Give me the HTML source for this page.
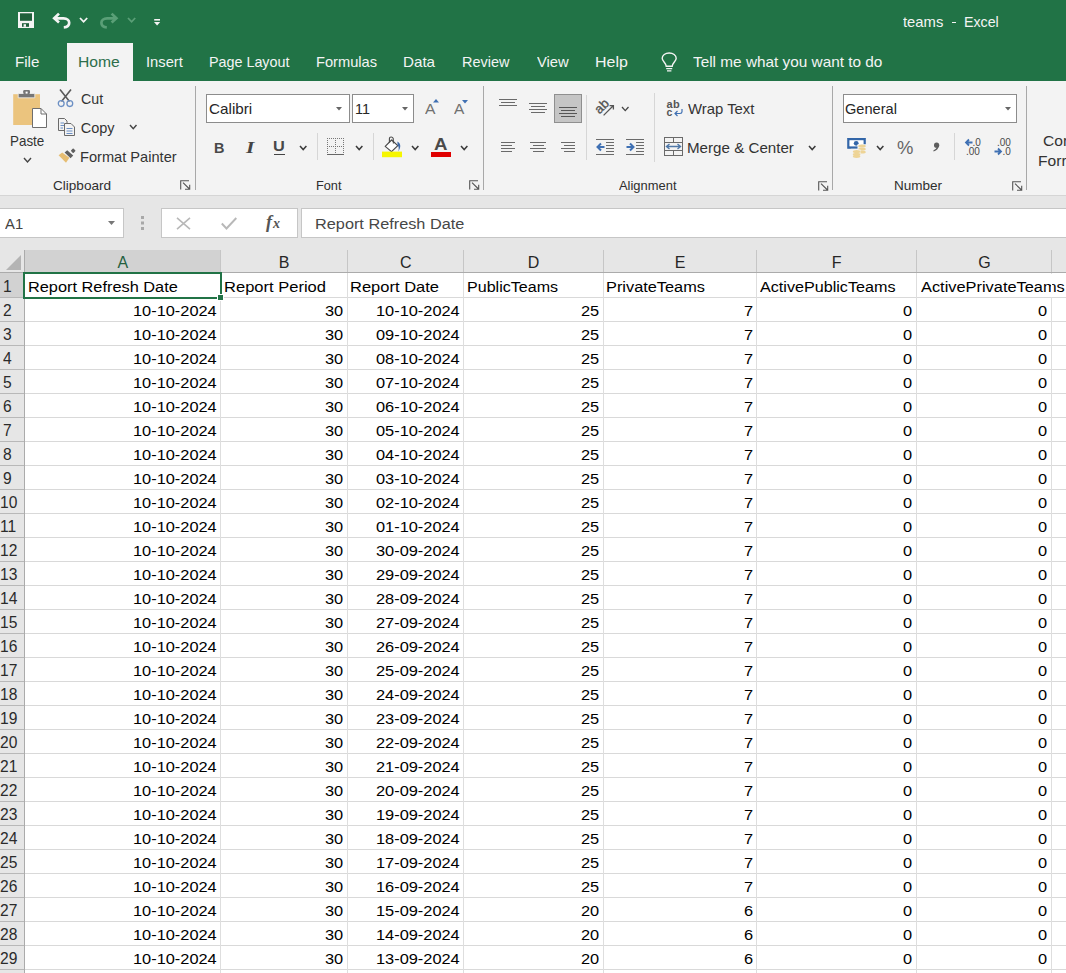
<!DOCTYPE html>
<html><head><meta charset="utf-8">
<style>
*{margin:0;padding:0;box-sizing:border-box}
html,body{width:1066px;height:973px;overflow:hidden;background:#fff;font-family:"Liberation Sans",sans-serif;position:relative}
.a{position:absolute}
.t{position:absolute;white-space:nowrap;line-height:1;transform-origin:0 0}
svg{position:absolute;overflow:visible}
</style></head><body>
<div class="a" style="left:0px;top:0px;width:1066px;height:81px;background:#217346;"></div>
<svg style="left:18px;top:12px" width="16" height="16" viewBox="0 0 16 16"><rect x="0" y="0" width="16" height="16" fill="#f4f4f4"/><rect x="2" y="1.3" width="12" height="7.5" fill="#1f5f3b"/><rect x="4" y="11.2" width="7" height="3.6" fill="#1f5f3b"/><rect x="5.6" y="12.2" width="2.4" height="2.6" fill="#f4f4f4"/></svg>
<svg style="left:52px;top:12px" width="20" height="18" viewBox="0 0 20 18"><path d="M7 1.6 L2.2 6.2 L7 10.6" fill="none" stroke="#f4f4f4" stroke-width="2.7" stroke-linejoin="miter"/><path d="M2.4 6.4 H11.5 C15.2 6.4 17.2 8.4 17.2 10.8 C17.2 13.4 15.2 15.2 11.8 15.4" fill="none" stroke="#f4f4f4" stroke-width="2.7"/></svg>
<svg style="left:78.6px;top:17.4px" width="9.2" height="5.8" viewBox="-1 -1 9.2 5.8"><path d="M0 0 L3.6 3.8 L7.2 0" fill="none" stroke="#f4f4f4" stroke-width="1.8"/></svg>
<svg style="left:99px;top:12px" width="20" height="18" viewBox="0 0 20 18"><path d="M12.6 1.6 L17.4 6.2 L12.6 10.6" fill="none" stroke="#5a9f77" stroke-width="2.7"/><path d="M17.2 6.4 H8.1 C4.4 6.4 2.4 8.4 2.4 10.8 C2.4 13.4 4.4 15.2 7.8 15.4" fill="none" stroke="#5a9f77" stroke-width="2.7"/></svg>
<svg style="left:126.6px;top:17.4px" width="9.2" height="5.8" viewBox="-1 -1 9.2 5.8"><path d="M0 0 L3.6 3.8 L7.2 0" fill="none" stroke="#5a9f77" stroke-width="1.8"/></svg>
<svg style="left:153.6px;top:18.5px" width="7" height="8" viewBox="0 0 7 8"><rect x="0.2" y="0" width="5.8" height="1.6" fill="#f4f4f4"/><path d="M0 3 H6.2 L3.1 6.6 Z" fill="#f4f4f4"/></svg>
<div class="t" style="left:903.08px;top:15.00px;font-size:14.5px;color:#f4f4f4;font-family:'Liberation Sans',sans-serif;transform:scaleX(1.0209)">teams</div>
<div class="a" style="left:952.3px;top:22px;width:4px;height:1.3px;background:#f4f4f4;"></div>
<div class="t" style="left:964.46px;top:15.00px;font-size:14.5px;color:#f4f4f4;font-family:'Liberation Sans',sans-serif;transform:scaleX(0.9805)">Excel</div>
<div class="a" style="left:67px;top:43px;width:66px;height:38px;background:#f3f3f3;"></div>
<div class="t" style="left:14.99px;top:54.00px;font-size:15px;color:#f4f4f4;font-family:'Liberation Sans',sans-serif;transform:scaleX(1.0101)">File</div>
<div class="t" style="left:78.25px;top:54.00px;font-size:15px;color:#2d6e4b;font-family:'Liberation Sans',sans-serif;transform:scaleX(1.0446)">Home</div>
<div class="t" style="left:146.18px;top:54.00px;font-size:15px;color:#f4f4f4;font-family:'Liberation Sans',sans-serif;transform:scaleX(0.9813)">Insert</div>
<div class="t" style="left:209.25px;top:54.00px;font-size:15px;color:#f4f4f4;font-family:'Liberation Sans',sans-serif;transform:scaleX(0.9548)">Page Layout</div>
<div class="t" style="left:316.33px;top:54.00px;font-size:15px;color:#f4f4f4;font-family:'Liberation Sans',sans-serif;transform:scaleX(0.9766)">Formulas</div>
<div class="t" style="left:403.29px;top:54.00px;font-size:15px;color:#f4f4f4;font-family:'Liberation Sans',sans-serif;transform:scaleX(1.0115)">Data</div>
<div class="t" style="left:462.24px;top:54.00px;font-size:15px;color:#f4f4f4;font-family:'Liberation Sans',sans-serif;transform:scaleX(0.9625)">Review</div>
<div class="t" style="left:536.93px;top:54.00px;font-size:15px;color:#f4f4f4;font-family:'Liberation Sans',sans-serif;transform:scaleX(0.9852)">View</div>
<div class="t" style="left:595.12px;top:54.00px;font-size:15px;color:#f4f4f4;font-family:'Liberation Sans',sans-serif;transform:scaleX(1.0646)">Help</div>
<div class="t" style="left:692.69px;top:54.00px;font-size:15px;color:#f4f4f4;font-family:'Liberation Sans',sans-serif;transform:scaleX(1.0233)">Tell me what you want to do</div>
<svg style="left:661px;top:52px" width="17" height="21" viewBox="0 0 17 21"><path d="M5.2 14.2 C5.2 11 1.2 9.5 1.2 6.2 C1.2 3.2 4.3 1 8.2 1 C12.1 1 15.2 3.2 15.2 6.2 C15.2 9.5 11.2 11 11.2 14.2 Z" fill="none" stroke="#f4f4f4" stroke-width="1.4"/><path d="M5.2 16.6 H11.2 M6 18.8 H10.4" stroke="#f4f4f4" stroke-width="1.3"/></svg>
<div class="a" style="left:0px;top:81px;width:1066px;height:114px;background:#f3f3f3;"></div>
<div class="a" style="left:0px;top:195px;width:1066px;height:1px;background:#d5d5d5;"></div>
<div class="a" style="left:195px;top:86px;width:1px;height:104px;background:#a8a8a8;"></div>
<div class="a" style="left:483px;top:86px;width:1px;height:104px;background:#a8a8a8;"></div>
<div class="a" style="left:832px;top:86px;width:1px;height:104px;background:#a8a8a8;"></div>
<div class="a" style="left:1026px;top:86px;width:1px;height:104px;background:#a8a8a8;"></div>
<svg style="left:12px;top:89px" width="37" height="40" viewBox="0 0 37 40"><rect x="1.2" y="5.2" width="26.8" height="30.8" fill="#ebc47e"/><path d="M6.2 4.5 H22.8 V8.8 H6.2 Z" fill="#767676" stroke="#f3f3f3" stroke-width="0.8"/><rect x="11.2" y="1" width="6.8" height="4" rx="1.2" fill="#767676"/><rect x="13.6" y="2.6" width="2" height="2" fill="#fff"/><path d="M20.5 19.5 H29 L34.5 25 V38.5 H20.5 Z" fill="#fff" stroke="#6e6e6e" stroke-width="1"/><path d="M29 19.5 V25 H34.5" fill="none" stroke="#6e6e6e" stroke-width="1"/></svg>
<div class="t" style="left:9.63px;top:134.00px;font-size:14.5px;color:#333;font-family:'Liberation Sans',sans-serif;transform:scaleX(0.9252)">Paste</div>
<svg style="left:22.8px;top:156.7px" width="9" height="6" viewBox="-1 -1 9 6"><path d="M0 0 L3.5 4 L7 0" fill="none" stroke="#444" stroke-width="1.4"/></svg>
<svg style="left:57px;top:89px" width="18" height="19" viewBox="0 0 18 19"><path d="M3 0.5 L12.5 12.5 M14 0.5 L4.5 12.5" stroke="#5a5a5a" stroke-width="1.6"/><circle cx="4.2" cy="14.6" r="2.9" fill="none" stroke="#6b8fc4" stroke-width="1.3"/><circle cx="12.8" cy="14.6" r="2.9" fill="none" stroke="#6b8fc4" stroke-width="1.3"/></svg>
<div class="t" style="left:80.79px;top:92.00px;font-size:14.5px;color:#333;font-family:'Liberation Sans',sans-serif;transform:scaleX(0.9793)">Cut</div>
<svg style="left:57px;top:117px" width="19" height="20" viewBox="0 0 19 20"><path d="M1.5 1.5 H7.5 L10 4 V13.5 H1.5 Z" fill="#f3f3f3" stroke="#6a6a6a" stroke-width="1"/><path d="M3.5 6 H7 M3.5 8.5 H7 M3.5 11 H6" stroke="#6b8fc4" stroke-width="1"/><path d="M7.5 6.5 H14 L17.5 10 V18.5 H7.5 Z" fill="#f3f3f3" stroke="#6a6a6a" stroke-width="1"/><path d="M9.5 11.5 H15.5 M9.5 14 H15.5 M9.5 16.5 H15.5" stroke="#6b8fc4" stroke-width="1"/></svg>
<div class="t" style="left:80.78px;top:121.00px;font-size:14.5px;color:#333;font-family:'Liberation Sans',sans-serif">Copy</div>
<svg style="left:129.3px;top:124.4px" width="8.5" height="5.8" viewBox="-1 -1 8.5 5.8"><path d="M0 0 L3.25 3.8 L6.5 0" fill="none" stroke="#444" stroke-width="1.4"/></svg>
<svg style="left:54px;top:144px" width="26" height="24" viewBox="0 0 26 24"><path d="M4.6 11.2 L8.2 8.6 L15.4 13.8 L12 18.8 Z" fill="#e6bd72"/><path d="M10.6 8.6 L13.2 6.2 L19.2 11.6 L16.6 14.2 Z" fill="#5f5f5f"/><rect x="17.4" y="5" width="3.6" height="3.6" rx="0.8" transform="rotate(45 19.2 6.8)" fill="#5f5f5f"/></svg>
<div class="t" style="left:80.33px;top:150.00px;font-size:14.5px;color:#333;font-family:'Liberation Sans',sans-serif;transform:scaleX(1.0078)">Format Painter</div>
<div class="t" style="left:53.12px;top:179.00px;font-size:13px;color:#2e2e2e;font-family:'Liberation Sans',sans-serif;transform:scaleX(1.0435)">Clipboard</div>
<svg style="left:180px;top:180px" width="11" height="10" viewBox="0 0 11 10"><path d="M0.7 9.5 V0.7 H9 M3 2.7 L9.5 9 M5 9.3 H9.7 V4.7" fill="none" stroke="#555" stroke-width="1.1"/></svg>
<div class="a" style="left:206px;top:94px;width:144px;height:29px;background:#fff;border:1px solid #8c8c8c"></div>
<div class="t" style="left:208.84px;top:101.00px;font-size:15px;color:#262626;font-family:'Liberation Sans',sans-serif;transform:scaleX(1.0166)">Calibri</div>
<svg style="left:336px;top:107px" width="6" height="3.5" viewBox="0 0 6 3.5"><path d="M0 0 H6 L3.0 3.5Z" fill="#666"/></svg>
<div class="a" style="left:352px;top:94px;width:62px;height:29px;background:#fff;border:1px solid #8c8c8c"></div>
<div class="t" style="left:355.22px;top:101.00px;font-size:15px;color:#262626;font-family:'Liberation Sans',sans-serif;transform:scaleX(0.9617)">11</div>
<svg style="left:402px;top:107px" width="6" height="3.5" viewBox="0 0 6 3.5"><path d="M0 0 H6 L3.0 3.5Z" fill="#666"/></svg>
<div class="t" style="left:425.00px;top:101.00px;font-size:15px;color:#707070;font-family:'Liberation Sans',sans-serif;transform:scaleX(1.0426)">A</div>
<svg style="left:433px;top:99px" width="6" height="3.5" viewBox="0 0 6 3.5"><path d="M0 3.5 H6 L3 0Z" fill="#3f70b3"/></svg>
<div class="t" style="left:454.30px;top:101.00px;font-size:15px;color:#707070;font-family:'Liberation Sans',sans-serif;transform:scaleX(1.0326)">A</div>
<svg style="left:462px;top:99.5px" width="6" height="3.5" viewBox="0 0 6 3.5"><path d="M0 0 H6 L3 3.5Z" fill="#3f70b3"/></svg>
<div class="t" style="left:213.86px;top:140.00px;font-size:15px;color:#484848;font-family:'Liberation Sans',sans-serif;font-weight:bold;transform:scaleX(0.9617)">B</div>
<div class="t" style="left:246.21px;top:140.00px;font-size:16px;color:#444;font-family:'Liberation Serif',serif;font-weight:bold;font-style:italic;transform:scaleX(1.3372)">I</div>
<div class="t" style="left:273.32px;top:138.00px;font-size:15.5px;color:#484848;font-family:'Liberation Sans',sans-serif;font-weight:bold;transform:scaleX(1.0538)">U</div>
<div class="a" style="left:274px;top:153.5px;width:11px;height:1.2px;background:#444;"></div>
<svg style="left:299px;top:144.8px" width="8.4" height="5.6" viewBox="-1 -1 8.4 5.6"><path d="M0 0 L3.2 3.6 L6.4 0" fill="none" stroke="#3a3a3a" stroke-width="1.5"/></svg>
<div class="a" style="left:317px;top:133px;width:1px;height:27px;background:#d6d6d6;"></div>
<svg style="left:327px;top:138px" width="18" height="18" viewBox="0 0 18 18" shape-rendering="crispEdges"><path d="M0.5 0 V16 M8.5 0 V16 M16.5 0 V16 M0 0.5 H17 M0 8.5 H17" fill="none" stroke="#777" stroke-width="1" stroke-dasharray="1 1"/><path d="M0 16.5 H17" stroke="#666" stroke-width="1"/></svg>
<svg style="left:355px;top:144.8px" width="8.4" height="5.6" viewBox="-1 -1 8.4 5.6"><path d="M0 0 L3.2 3.6 L6.4 0" fill="none" stroke="#3a3a3a" stroke-width="1.5"/></svg>
<div class="a" style="left:373px;top:133px;width:1px;height:27px;background:#d6d6d6;"></div>
<svg style="left:378px;top:134px" width="26" height="26" viewBox="0 0 26 26"><path d="M7.2 12.4 L13.6 6 L19.8 11.6 L13.5 17.6 Z" fill="#fff" stroke="#4a4a4a" stroke-width="1.2" stroke-linejoin="round"/><path d="M11.4 8.4 V4.6 C11.4 2.6 14.6 2.6 15.2 4.4 L15.4 9.6" fill="none" stroke="#4a4a4a" stroke-width="1.1"/><path d="M19.4 7.6 C22.4 9 23.6 12.6 20.4 17.4 C21 14.2 20.8 12.2 19.6 11.4 Z" fill="#3f6aa8"/><rect x="4" y="17.6" width="20" height="5.6" fill="#f6f600"/></svg>
<svg style="left:411px;top:144.8px" width="8.4" height="5.6" viewBox="-1 -1 8.4 5.6"><path d="M0 0 L3.2 3.6 L6.4 0" fill="none" stroke="#3a3a3a" stroke-width="1.5"/></svg>
<div class="t" style="left:434.33px;top:137.00px;font-size:16px;color:#4a4a4a;font-family:'Liberation Sans',sans-serif;font-weight:bold;transform:scaleX(1.1660)">A</div>
<div class="a" style="left:431px;top:152px;width:20px;height:5px;background:#e00000;"></div>
<svg style="left:460px;top:144.8px" width="8.4" height="5.6" viewBox="-1 -1 8.4 5.6"><path d="M0 0 L3.2 3.6 L6.4 0" fill="none" stroke="#3a3a3a" stroke-width="1.5"/></svg>
<div class="t" style="left:315.58px;top:179.00px;font-size:13px;color:#2e2e2e;font-family:'Liberation Sans',sans-serif;transform:scaleX(0.9801)">Font</div>
<svg style="left:469px;top:180px" width="11" height="10" viewBox="0 0 11 10"><path d="M0.7 9.5 V0.7 H9 M3 2.7 L9.5 9 M5 9.3 H9.7 V4.7" fill="none" stroke="#555" stroke-width="1.1"/></svg>
<svg style="left:499px;top:99px" width="19" height="20" viewBox="0 0 19 20" shape-rendering="crispEdges"><path d="M0 0.5 H18M2 3.5 H16M0 6.5 H18" stroke="#6a6a6a" stroke-width="1"/></svg>
<svg style="left:529px;top:103px" width="19" height="20" viewBox="0 0 19 20" shape-rendering="crispEdges"><path d="M0 0.5 H18M2 3.5 H16M0 6.5 H18M2 9.5 H16" stroke="#6a6a6a" stroke-width="1"/></svg>
<div class="a" style="left:554px;top:94px;width:28px;height:29px;background:#c5c5c5;border:1px solid #8f8f8f"></div>
<svg style="left:559px;top:107px" width="19" height="20" viewBox="0 0 19 20" shape-rendering="crispEdges"><path d="M0 0.5 H18M2 3.5 H16M0 6.5 H18M2 9.5 H16" stroke="#555" stroke-width="1"/></svg>
<div class="a" style="left:586px;top:95px;width:1px;height:65px;background:#d6d6d6;"></div>
<svg style="left:595px;top:98px" width="22" height="19" viewBox="0 0 22 19"><text x="0" y="0" font-family="Liberation Sans" font-size="13" fill="#555" stroke="#555" stroke-width="0.35" transform="translate(4.6 16.4) rotate(-45)">ab</text><path d="M8.6 17.4 L18.2 7.8 M14.6 7.6 H18.4 V11.4" fill="none" stroke="#555" stroke-width="1.3"/></svg>
<svg style="left:621px;top:106px" width="8.5" height="5.6" viewBox="-1 -1 8.5 5.6"><path d="M0 0 L3.25 3.6 L6.5 0" fill="none" stroke="#444" stroke-width="1.3"/></svg>
<svg style="left:501px;top:142px" width="19" height="20" viewBox="0 0 19 20" shape-rendering="crispEdges"><path d="M0 0.5 H14M0 3.5 H11M0 6.5 H14M0 9.5 H11" stroke="#6a6a6a" stroke-width="1"/></svg>
<svg style="left:530px;top:142px" width="19" height="20" viewBox="0 0 19 20" shape-rendering="crispEdges"><path d="M0 0.5 H16M2.5 3.5 H13.5M0 6.5 H16M2.5 9.5 H13.5" stroke="#6a6a6a" stroke-width="1"/></svg>
<svg style="left:561px;top:142px" width="19" height="20" viewBox="0 0 19 20" shape-rendering="crispEdges"><path d="M0 0.5 H14M3 3.5 H14M0 6.5 H14M3 9.5 H14" stroke="#6a6a6a" stroke-width="1"/></svg>
<svg style="left:596px;top:139px" width="19" height="17" viewBox="0 0 19 17" ><path d="M0 0.5 H18 M9.5 3.5 H18 M9.5 6.5 H18 M9.5 9.5 H18 M9.5 12.5 H18 M0 15.5 H18" stroke="#6a6a6a" stroke-width="1" shape-rendering="crispEdges"/><path d="M1.5 8 H8.5 M5 4.5 L1.5 8 L5 11.5" fill="none" stroke="#3f70b3" stroke-width="2"/></svg>
<svg style="left:626px;top:139px" width="19" height="17" viewBox="0 0 19 17" ><path d="M0 0.5 H18 M9.5 3.5 H18 M9.5 6.5 H18 M9.5 9.5 H18 M9.5 12.5 H18 M0 15.5 H18" stroke="#6a6a6a" stroke-width="1" shape-rendering="crispEdges"/><path d="M0.5 8 H7.5 M4 4.5 L7.5 8 L4 11.5" fill="none" stroke="#3f70b3" stroke-width="2"/></svg>
<div class="a" style="left:654px;top:93px;width:1px;height:69px;background:#d6d6d6;"></div>
<svg style="left:665px;top:99px" width="19" height="19" viewBox="0 0 19 19"><text x="1.6" y="8.8" font-family="Liberation Sans" font-size="11" font-weight="bold" letter-spacing="0.4" fill="#555">ab</text><text x="1.6" y="16.8" font-family="Liberation Sans" font-size="10.5" font-weight="bold" fill="#555">c</text><path d="M17 10 V12.8 C17 14 16 14.5 15 14.5 H10 M12.5 12 L10 14.5 L12.5 17" fill="none" stroke="#3f70b3" stroke-width="1.2"/></svg>
<div class="t" style="left:688.43px;top:102.00px;font-size:14.5px;color:#333;font-family:'Liberation Sans',sans-serif;transform:scaleX(1.0260)">Wrap Text</div>
<svg style="left:664px;top:137px" width="19" height="19" viewBox="0 0 19 19" ><path d="M0.5 0.5 H18.5 V18.5 H0.5 Z M0.5 5.5 H18.5 M0.5 13.5 H18.5 M9.5 0.5 V5.5 M9.5 13.5 V18.5" fill="none" stroke="#6a6a6a" stroke-width="1" shape-rendering="crispEdges"/><path d="M2.5 9.5 H16.5 M5.5 7 L2.5 9.5 L5.5 12 M13.5 7 L16.5 9.5 L13.5 12" fill="none" stroke="#4f78a8" stroke-width="1.4"/></svg>
<div class="t" style="left:687.29px;top:141.00px;font-size:14.5px;color:#333;font-family:'Liberation Sans',sans-serif;transform:scaleX(1.0444)">Merge &amp; Center</div>
<svg style="left:808px;top:144.8px" width="8.4" height="5.6" viewBox="-1 -1 8.4 5.6"><path d="M0 0 L3.2 3.6 L6.4 0" fill="none" stroke="#3a3a3a" stroke-width="1.5"/></svg>
<div class="t" style="left:618.50px;top:179.00px;font-size:13px;color:#2e2e2e;font-family:'Liberation Sans',sans-serif;transform:scaleX(0.9945)">Alignment</div>
<svg style="left:818px;top:180.5px" width="11" height="10" viewBox="0 0 11 10"><path d="M0.7 9.5 V0.7 H9 M3 2.7 L9.5 9 M5 9.3 H9.7 V4.7" fill="none" stroke="#555" stroke-width="1.1"/></svg>
<div class="a" style="left:843px;top:94px;width:174px;height:29px;background:#fff;border:1px solid #8c8c8c"></div>
<div class="t" style="left:845.47px;top:101.00px;font-size:15px;color:#262626;font-family:'Liberation Sans',sans-serif;transform:scaleX(0.9729)">General</div>
<svg style="left:1005px;top:107px" width="6" height="3.5" viewBox="0 0 6 3.5"><path d="M0 0 H6 L3.0 3.5Z" fill="#666"/></svg>
<svg style="left:842px;top:132px" width="30" height="30" viewBox="0 0 30 30"><rect x="5.2" y="6" width="18.6" height="10.6" fill="#3366a8"/><path d="M7.4 8.2 H21.6 V14.4 H7.4 Z" fill="#fff"/><path d="M5.2 6 H9 L7.4 8.2 Z M23.8 6 H20 L21.6 8.2 Z M5.2 16.6 H9 L7.4 14.4 Z" fill="#3366a8"/><circle cx="14.2" cy="11.3" r="2.4" fill="#3366a8"/><rect x="15.5" y="12.2" width="9" height="10" fill="#f3f3f3"/><ellipse cx="20" cy="14" rx="3.8" ry="1.6" fill="#eed496"/><ellipse cx="20" cy="17" rx="3.8" ry="1.6" fill="#eed496"/><ellipse cx="20" cy="20" rx="3.8" ry="1.6" fill="#eed496"/><rect x="10" y="17.5" width="8.5" height="8" fill="#f3f3f3"/><ellipse cx="14.6" cy="19.6" rx="3.8" ry="1.6" fill="#eed496"/><ellipse cx="14.6" cy="22.4" rx="3.8" ry="1.6" fill="#eed496"/><ellipse cx="14.6" cy="24.6" rx="3.8" ry="1.4" fill="#eed496"/></svg>
<svg style="left:876px;top:144.8px" width="8.4" height="5.6" viewBox="-1 -1 8.4 5.6"><path d="M0 0 L3.2 3.6 L6.4 0" fill="none" stroke="#3a3a3a" stroke-width="1.5"/></svg>
<div class="t" style="left:897.46px;top:139.00px;font-size:18px;color:#666;font-family:'Liberation Sans',sans-serif;transform:scaleX(1.0230)">%</div>
<svg style="left:932px;top:142px" width="8" height="10" viewBox="0 0 8 10"><circle cx="4.6" cy="3.2" r="2.6" fill="#5e5e5e"/><path d="M6.6 3.4 C6.8 6.2 5 8.4 1.6 9.4 L1.3 8.4 C3.6 7.4 4.8 6 4.8 4.2 Z" fill="#5e5e5e"/></svg>
<div class="a" style="left:954px;top:133px;width:1px;height:27px;background:#d6d6d6;"></div>
<svg style="left:964px;top:138px" width="18" height="19" viewBox="0 0 18 19"><path d="M2 4.5 H8.5 M5 1.5 L2 4.5 L5 7.5" fill="none" stroke="#3f70b3" stroke-width="1.8"/><text x="8.5" y="8" font-family="Liberation Sans" font-size="10" fill="#4a4a4a">.0</text><text x="2" y="17" font-family="Liberation Sans" font-size="10" fill="#4a4a4a">.00</text></svg>
<svg style="left:993px;top:138px" width="18" height="19" viewBox="0 0 18 19"><text x="4" y="8" font-family="Liberation Sans" font-size="10" fill="#4a4a4a">.00</text><path d="M1.5 13.5 H8 M5 10.5 L8 13.5 L5 16.5" fill="none" stroke="#3f70b3" stroke-width="1.8"/><text x="9.5" y="17" font-family="Liberation Sans" font-size="10" fill="#4a4a4a">.0</text></svg>
<div class="t" style="left:894.22px;top:179.00px;font-size:13px;color:#2e2e2e;font-family:'Liberation Sans',sans-serif;transform:scaleX(1.0405)">Number</div>
<svg style="left:1011.5px;top:180.5px" width="11" height="10" viewBox="0 0 11 10"><path d="M0.7 9.5 V0.7 H9 M3 2.7 L9.5 9 M5 9.3 H9.7 V4.7" fill="none" stroke="#555" stroke-width="1.1"/></svg>
<div class="t" style="left:1043.42px;top:133.00px;font-size:15px;color:#333;font-family:'Liberation Sans',sans-serif;transform:scaleX(1.0400)">Cor</div>
<div class="t" style="left:1037.95px;top:153.00px;font-size:15px;color:#333;font-family:'Liberation Sans',sans-serif;transform:scaleX(1.0400)">Forr</div>
<div class="a" style="left:0px;top:196px;width:1066px;height:54px;background:#e6e6e6;"></div>
<div class="a" style="left:-1px;top:208px;width:125px;height:30px;background:#fff;border:1px solid #c6c6c6"></div>
<div class="t" style="left:4.60px;top:216.00px;font-size:15.5px;color:#444;font-family:'Liberation Sans',sans-serif;transform:scaleX(0.9554)">A1</div>
<svg style="left:108px;top:221px" width="7" height="4" viewBox="0 0 7 4"><path d="M0 0 H7 L3.5 4Z" fill="#777"/></svg>
<svg style="left:141px;top:216px" width="3" height="14" viewBox="0 0 3 14"><rect x="0" y="0" width="3" height="3" fill="#a8a8a8"/><rect x="0" y="5.5" width="3" height="3" fill="#a8a8a8"/><rect x="0" y="11" width="3" height="3" fill="#a8a8a8"/></svg>
<div class="a" style="left:161px;top:208px;width:137px;height:30px;background:#fff;border:1px solid #c6c6c6"></div>
<svg style="left:176px;top:217px" width="15" height="13" viewBox="0 0 15 13"><path d="M1 0.8 L14 12.2 M14 0.8 L1 12.2" stroke="#b8b8b8" stroke-width="1.6"/></svg>
<svg style="left:221px;top:217px" width="16" height="13" viewBox="0 0 16 13"><path d="M0.8 6.5 L5.5 11.5 L15.3 1" fill="none" stroke="#b8b8b8" stroke-width="1.9"/></svg>

<svg style="left:264.5px;top:210.5px" width="19" height="21" viewBox="0 0 19 21"><text x="1" y="16.5" font-family="Liberation Serif" font-style="italic" font-weight="bold" font-size="18" fill="#555">f</text><text x="8" y="16.5" font-family="Liberation Serif" font-style="italic" font-weight="bold" font-size="14" fill="#555">x</text></svg>
<div class="a" style="left:301px;top:208px;width:780px;height:30px;background:#fff;border:1px solid #c6c6c6"></div>
<div class="t" style="left:315.00px;top:216.00px;font-size:15.5px;color:#474747;font-family:'Liberation Sans',sans-serif;transform:scaleX(1.0507)">Report Refresh Date</div>
<div class="a" style="left:0px;top:250px;width:1066px;height:723px;background:#fff;"></div>
<div class="a" style="left:0px;top:250px;width:1066px;height:23px;background:#e6e6e6;"></div>
<div class="a" style="left:24px;top:250px;width:196px;height:23px;background:#d2d2d2;"></div>
<div class="a" style="left:0px;top:272px;width:1066px;height:1px;background:#ababab;"></div>
<div class="a" style="left:220px;top:250px;width:1px;height:22px;background:#c6c6c6;"></div>
<div class="a" style="left:347px;top:250px;width:1px;height:22px;background:#c6c6c6;"></div>
<div class="a" style="left:463px;top:250px;width:1px;height:22px;background:#c6c6c6;"></div>
<div class="a" style="left:603px;top:250px;width:1px;height:22px;background:#c6c6c6;"></div>
<div class="a" style="left:756px;top:250px;width:1px;height:22px;background:#c6c6c6;"></div>
<div class="a" style="left:916px;top:250px;width:1px;height:22px;background:#c6c6c6;"></div>
<div class="a" style="left:1051px;top:250px;width:1px;height:22px;background:#c6c6c6;"></div>
<svg style="left:6px;top:255px" width="15" height="15" viewBox="0 0 15 15"><path d="M15 0 V15 H0 Z" fill="#b4b4b4"/></svg>
<div class="a" style="left:0px;top:273px;width:24px;height:700px;background:#e6e6e6;"></div>
<div class="a" style="left:0px;top:273px;width:24px;height:24px;background:#d2d2d2;"></div>
<div class="a" style="left:24px;top:250px;width:1px;height:723px;background:#ababab;"></div>
<div class="t" style="left:117.58px;top:255.00px;font-size:16px;color:#245f3f;font-family:'Liberation Sans',sans-serif">A</div>
<div class="t" style="left:278.84px;top:255.00px;font-size:16px;color:#262626;font-family:'Liberation Sans',sans-serif">B</div>
<div class="t" style="left:400.02px;top:255.00px;font-size:16px;color:#262626;font-family:'Liberation Sans',sans-serif">C</div>
<div class="t" style="left:527.86px;top:255.00px;font-size:16px;color:#262626;font-family:'Liberation Sans',sans-serif">D</div>
<div class="t" style="left:674.76px;top:255.00px;font-size:16px;color:#262626;font-family:'Liberation Sans',sans-serif">E</div>
<div class="t" style="left:831.70px;top:255.00px;font-size:16px;color:#262626;font-family:'Liberation Sans',sans-serif">F</div>
<div class="t" style="left:978.36px;top:255.00px;font-size:16px;color:#262626;font-family:'Liberation Sans',sans-serif">G</div>
<div class="t" style="left:1120.64px;top:255.00px;font-size:16px;color:#262626;font-family:'Liberation Sans',sans-serif">H</div>
<div class="t" style="left:2.84px;top:279.00px;font-size:16px;color:#2b2b2b;font-family:'Liberation Sans',sans-serif;transform:scaleX(0.9750)">1</div>
<div class="t" style="left:3.07px;top:303.00px;font-size:16px;color:#2b2b2b;font-family:'Liberation Sans',sans-serif;transform:scaleX(0.9750)">2</div>
<div class="t" style="left:3.07px;top:327.00px;font-size:16px;color:#2b2b2b;font-family:'Liberation Sans',sans-serif;transform:scaleX(0.9750)">3</div>
<div class="t" style="left:3.15px;top:351.00px;font-size:16px;color:#2b2b2b;font-family:'Liberation Sans',sans-serif;transform:scaleX(0.9750)">4</div>
<div class="t" style="left:3.07px;top:375.00px;font-size:16px;color:#2b2b2b;font-family:'Liberation Sans',sans-serif;transform:scaleX(0.9750)">5</div>
<div class="t" style="left:2.99px;top:399.00px;font-size:16px;color:#2b2b2b;font-family:'Liberation Sans',sans-serif;transform:scaleX(0.9750)">6</div>
<div class="t" style="left:3.07px;top:423.00px;font-size:16px;color:#2b2b2b;font-family:'Liberation Sans',sans-serif;transform:scaleX(0.9750)">7</div>
<div class="t" style="left:3.03px;top:447.00px;font-size:16px;color:#2b2b2b;font-family:'Liberation Sans',sans-serif;transform:scaleX(0.9750)">8</div>
<div class="t" style="left:3.07px;top:471.00px;font-size:16px;color:#2b2b2b;font-family:'Liberation Sans',sans-serif;transform:scaleX(0.9750)">9</div>
<div class="t" style="left:-0.32px;top:495.00px;font-size:16px;color:#2b2b2b;font-family:'Liberation Sans',sans-serif;transform:scaleX(0.9750)">10</div>
<div class="t" style="left:0.34px;top:519.00px;font-size:16px;color:#2b2b2b;font-family:'Liberation Sans',sans-serif;transform:scaleX(0.9750)">11</div>
<div class="t" style="left:-0.20px;top:543.00px;font-size:16px;color:#2b2b2b;font-family:'Liberation Sans',sans-serif;transform:scaleX(0.9750)">12</div>
<div class="t" style="left:-0.28px;top:567.00px;font-size:16px;color:#2b2b2b;font-family:'Liberation Sans',sans-serif;transform:scaleX(0.9750)">13</div>
<div class="t" style="left:-0.36px;top:591.00px;font-size:16px;color:#2b2b2b;font-family:'Liberation Sans',sans-serif;transform:scaleX(0.9750)">14</div>
<div class="t" style="left:-0.28px;top:615.00px;font-size:16px;color:#2b2b2b;font-family:'Liberation Sans',sans-serif;transform:scaleX(0.9750)">15</div>
<div class="t" style="left:-0.28px;top:639.00px;font-size:16px;color:#2b2b2b;font-family:'Liberation Sans',sans-serif;transform:scaleX(0.9750)">16</div>
<div class="t" style="left:-0.20px;top:663.00px;font-size:16px;color:#2b2b2b;font-family:'Liberation Sans',sans-serif;transform:scaleX(0.9750)">17</div>
<div class="t" style="left:-0.28px;top:687.00px;font-size:16px;color:#2b2b2b;font-family:'Liberation Sans',sans-serif;transform:scaleX(0.9750)">18</div>
<div class="t" style="left:-0.24px;top:711.00px;font-size:16px;color:#2b2b2b;font-family:'Liberation Sans',sans-serif;transform:scaleX(0.9750)">19</div>
<div class="t" style="left:-0.12px;top:735.00px;font-size:16px;color:#2b2b2b;font-family:'Liberation Sans',sans-serif;transform:scaleX(0.9750)">20</div>
<div class="t" style="left:-0.05px;top:759.00px;font-size:16px;color:#2b2b2b;font-family:'Liberation Sans',sans-serif;transform:scaleX(0.9750)">21</div>
<div class="t" style="left:-0.01px;top:783.00px;font-size:16px;color:#2b2b2b;font-family:'Liberation Sans',sans-serif;transform:scaleX(0.9750)">22</div>
<div class="t" style="left:-0.09px;top:807.00px;font-size:16px;color:#2b2b2b;font-family:'Liberation Sans',sans-serif;transform:scaleX(0.9750)">23</div>
<div class="t" style="left:-0.16px;top:831.00px;font-size:16px;color:#2b2b2b;font-family:'Liberation Sans',sans-serif;transform:scaleX(0.9750)">24</div>
<div class="t" style="left:-0.09px;top:855.00px;font-size:16px;color:#2b2b2b;font-family:'Liberation Sans',sans-serif;transform:scaleX(0.9750)">25</div>
<div class="t" style="left:-0.09px;top:879.00px;font-size:16px;color:#2b2b2b;font-family:'Liberation Sans',sans-serif;transform:scaleX(0.9750)">26</div>
<div class="t" style="left:-0.01px;top:903.00px;font-size:16px;color:#2b2b2b;font-family:'Liberation Sans',sans-serif;transform:scaleX(0.9750)">27</div>
<div class="t" style="left:-0.09px;top:927.00px;font-size:16px;color:#2b2b2b;font-family:'Liberation Sans',sans-serif;transform:scaleX(0.9750)">28</div>
<div class="t" style="left:-0.05px;top:951.00px;font-size:16px;color:#2b2b2b;font-family:'Liberation Sans',sans-serif;transform:scaleX(0.9750)">29</div>
<div class="a" style="left:0px;top:297px;width:24px;height:1px;background:#b8b8b8;"></div>
<div class="a" style="left:25px;top:297px;width:1041px;height:1px;background:#d9d9d9;"></div>
<div class="a" style="left:0px;top:321px;width:24px;height:1px;background:#b8b8b8;"></div>
<div class="a" style="left:25px;top:321px;width:1041px;height:1px;background:#d9d9d9;"></div>
<div class="a" style="left:0px;top:345px;width:24px;height:1px;background:#b8b8b8;"></div>
<div class="a" style="left:25px;top:345px;width:1041px;height:1px;background:#d9d9d9;"></div>
<div class="a" style="left:0px;top:369px;width:24px;height:1px;background:#b8b8b8;"></div>
<div class="a" style="left:25px;top:369px;width:1041px;height:1px;background:#d9d9d9;"></div>
<div class="a" style="left:0px;top:393px;width:24px;height:1px;background:#b8b8b8;"></div>
<div class="a" style="left:25px;top:393px;width:1041px;height:1px;background:#d9d9d9;"></div>
<div class="a" style="left:0px;top:417px;width:24px;height:1px;background:#b8b8b8;"></div>
<div class="a" style="left:25px;top:417px;width:1041px;height:1px;background:#d9d9d9;"></div>
<div class="a" style="left:0px;top:441px;width:24px;height:1px;background:#b8b8b8;"></div>
<div class="a" style="left:25px;top:441px;width:1041px;height:1px;background:#d9d9d9;"></div>
<div class="a" style="left:0px;top:465px;width:24px;height:1px;background:#b8b8b8;"></div>
<div class="a" style="left:25px;top:465px;width:1041px;height:1px;background:#d9d9d9;"></div>
<div class="a" style="left:0px;top:489px;width:24px;height:1px;background:#b8b8b8;"></div>
<div class="a" style="left:25px;top:489px;width:1041px;height:1px;background:#d9d9d9;"></div>
<div class="a" style="left:0px;top:513px;width:24px;height:1px;background:#b8b8b8;"></div>
<div class="a" style="left:25px;top:513px;width:1041px;height:1px;background:#d9d9d9;"></div>
<div class="a" style="left:0px;top:537px;width:24px;height:1px;background:#b8b8b8;"></div>
<div class="a" style="left:25px;top:537px;width:1041px;height:1px;background:#d9d9d9;"></div>
<div class="a" style="left:0px;top:561px;width:24px;height:1px;background:#b8b8b8;"></div>
<div class="a" style="left:25px;top:561px;width:1041px;height:1px;background:#d9d9d9;"></div>
<div class="a" style="left:0px;top:585px;width:24px;height:1px;background:#b8b8b8;"></div>
<div class="a" style="left:25px;top:585px;width:1041px;height:1px;background:#d9d9d9;"></div>
<div class="a" style="left:0px;top:609px;width:24px;height:1px;background:#b8b8b8;"></div>
<div class="a" style="left:25px;top:609px;width:1041px;height:1px;background:#d9d9d9;"></div>
<div class="a" style="left:0px;top:633px;width:24px;height:1px;background:#b8b8b8;"></div>
<div class="a" style="left:25px;top:633px;width:1041px;height:1px;background:#d9d9d9;"></div>
<div class="a" style="left:0px;top:657px;width:24px;height:1px;background:#b8b8b8;"></div>
<div class="a" style="left:25px;top:657px;width:1041px;height:1px;background:#d9d9d9;"></div>
<div class="a" style="left:0px;top:681px;width:24px;height:1px;background:#b8b8b8;"></div>
<div class="a" style="left:25px;top:681px;width:1041px;height:1px;background:#d9d9d9;"></div>
<div class="a" style="left:0px;top:705px;width:24px;height:1px;background:#b8b8b8;"></div>
<div class="a" style="left:25px;top:705px;width:1041px;height:1px;background:#d9d9d9;"></div>
<div class="a" style="left:0px;top:729px;width:24px;height:1px;background:#b8b8b8;"></div>
<div class="a" style="left:25px;top:729px;width:1041px;height:1px;background:#d9d9d9;"></div>
<div class="a" style="left:0px;top:753px;width:24px;height:1px;background:#b8b8b8;"></div>
<div class="a" style="left:25px;top:753px;width:1041px;height:1px;background:#d9d9d9;"></div>
<div class="a" style="left:0px;top:777px;width:24px;height:1px;background:#b8b8b8;"></div>
<div class="a" style="left:25px;top:777px;width:1041px;height:1px;background:#d9d9d9;"></div>
<div class="a" style="left:0px;top:801px;width:24px;height:1px;background:#b8b8b8;"></div>
<div class="a" style="left:25px;top:801px;width:1041px;height:1px;background:#d9d9d9;"></div>
<div class="a" style="left:0px;top:825px;width:24px;height:1px;background:#b8b8b8;"></div>
<div class="a" style="left:25px;top:825px;width:1041px;height:1px;background:#d9d9d9;"></div>
<div class="a" style="left:0px;top:849px;width:24px;height:1px;background:#b8b8b8;"></div>
<div class="a" style="left:25px;top:849px;width:1041px;height:1px;background:#d9d9d9;"></div>
<div class="a" style="left:0px;top:873px;width:24px;height:1px;background:#b8b8b8;"></div>
<div class="a" style="left:25px;top:873px;width:1041px;height:1px;background:#d9d9d9;"></div>
<div class="a" style="left:0px;top:897px;width:24px;height:1px;background:#b8b8b8;"></div>
<div class="a" style="left:25px;top:897px;width:1041px;height:1px;background:#d9d9d9;"></div>
<div class="a" style="left:0px;top:921px;width:24px;height:1px;background:#b8b8b8;"></div>
<div class="a" style="left:25px;top:921px;width:1041px;height:1px;background:#d9d9d9;"></div>
<div class="a" style="left:0px;top:945px;width:24px;height:1px;background:#b8b8b8;"></div>
<div class="a" style="left:25px;top:945px;width:1041px;height:1px;background:#d9d9d9;"></div>
<div class="a" style="left:0px;top:969px;width:24px;height:1px;background:#b8b8b8;"></div>
<div class="a" style="left:25px;top:969px;width:1041px;height:1px;background:#d9d9d9;"></div>
<div class="a" style="left:220px;top:273px;width:1px;height:700px;background:#dedede;"></div>
<div class="a" style="left:347px;top:273px;width:1px;height:700px;background:#dedede;"></div>
<div class="a" style="left:463px;top:273px;width:1px;height:700px;background:#dedede;"></div>
<div class="a" style="left:603px;top:273px;width:1px;height:700px;background:#dedede;"></div>
<div class="a" style="left:756px;top:273px;width:1px;height:700px;background:#dedede;"></div>
<div class="a" style="left:916px;top:273px;width:1px;height:700px;background:#dedede;"></div>
<div class="a" style="left:1051px;top:273px;width:1px;height:700px;background:#dedede;"></div>
<div class="t" style="left:27.59px;top:279.00px;font-size:15.5px;color:#000;font-family:'Liberation Sans',sans-serif;transform:scaleX(1.0535)">Report Refresh Date</div>
<div class="t" style="left:223.68px;top:279.00px;font-size:15.5px;color:#000;font-family:'Liberation Sans',sans-serif;transform:scaleX(1.0665)">Report Period</div>
<div class="t" style="left:350.48px;top:279.00px;font-size:15.5px;color:#000;font-family:'Liberation Sans',sans-serif;transform:scaleX(1.0649)">Report Date</div>
<div class="t" style="left:466.62px;top:279.00px;font-size:15.5px;color:#000;font-family:'Liberation Sans',sans-serif;transform:scaleX(1.0360)">PublicTeams</div>
<div class="t" style="left:606.49px;top:279.00px;font-size:15.5px;color:#000;font-family:'Liberation Sans',sans-serif;transform:scaleX(1.0537)">PrivateTeams</div>
<div class="t" style="left:760.40px;top:279.00px;font-size:15.5px;color:#000;font-family:'Liberation Sans',sans-serif;transform:scaleX(1.0417)">ActivePublicTeams</div>
<div class="t" style="left:920.50px;top:279.00px;font-size:15.5px;color:#000;font-family:'Liberation Sans',sans-serif;transform:scaleX(1.0565)">ActivePrivateTeams</div>
<div class="t" style="left:132.77px;top:303.00px;font-size:15.5px;color:#000;font-family:'Liberation Sans',sans-serif;transform:scaleX(1.0560)">10-10-2024</div>
<div class="t" style="left:325.40px;top:303.00px;font-size:15.5px;color:#000;font-family:'Liberation Sans',sans-serif;transform:scaleX(1.0560)">30</div>
<div class="t" style="left:375.77px;top:303.00px;font-size:15.5px;color:#000;font-family:'Liberation Sans',sans-serif;transform:scaleX(1.0560)">10-10-2024</div>
<div class="t" style="left:581.49px;top:303.00px;font-size:15.5px;color:#000;font-family:'Liberation Sans',sans-serif;transform:scaleX(1.0560)">25</div>
<div class="t" style="left:743.73px;top:303.00px;font-size:15.5px;color:#000;font-family:'Liberation Sans',sans-serif;transform:scaleX(1.0560)">7</div>
<div class="t" style="left:903.49px;top:303.00px;font-size:15.5px;color:#000;font-family:'Liberation Sans',sans-serif;transform:scaleX(1.0560)">0</div>
<div class="t" style="left:1038.49px;top:303.00px;font-size:15.5px;color:#000;font-family:'Liberation Sans',sans-serif;transform:scaleX(1.0560)">0</div>
<div class="t" style="left:132.77px;top:327.00px;font-size:15.5px;color:#000;font-family:'Liberation Sans',sans-serif;transform:scaleX(1.0560)">10-10-2024</div>
<div class="t" style="left:325.40px;top:327.00px;font-size:15.5px;color:#000;font-family:'Liberation Sans',sans-serif;transform:scaleX(1.0560)">30</div>
<div class="t" style="left:375.77px;top:327.00px;font-size:15.5px;color:#000;font-family:'Liberation Sans',sans-serif;transform:scaleX(1.0560)">09-10-2024</div>
<div class="t" style="left:581.49px;top:327.00px;font-size:15.5px;color:#000;font-family:'Liberation Sans',sans-serif;transform:scaleX(1.0560)">25</div>
<div class="t" style="left:743.73px;top:327.00px;font-size:15.5px;color:#000;font-family:'Liberation Sans',sans-serif;transform:scaleX(1.0560)">7</div>
<div class="t" style="left:903.49px;top:327.00px;font-size:15.5px;color:#000;font-family:'Liberation Sans',sans-serif;transform:scaleX(1.0560)">0</div>
<div class="t" style="left:1038.49px;top:327.00px;font-size:15.5px;color:#000;font-family:'Liberation Sans',sans-serif;transform:scaleX(1.0560)">0</div>
<div class="t" style="left:132.77px;top:351.00px;font-size:15.5px;color:#000;font-family:'Liberation Sans',sans-serif;transform:scaleX(1.0560)">10-10-2024</div>
<div class="t" style="left:325.40px;top:351.00px;font-size:15.5px;color:#000;font-family:'Liberation Sans',sans-serif;transform:scaleX(1.0560)">30</div>
<div class="t" style="left:375.77px;top:351.00px;font-size:15.5px;color:#000;font-family:'Liberation Sans',sans-serif;transform:scaleX(1.0560)">08-10-2024</div>
<div class="t" style="left:581.49px;top:351.00px;font-size:15.5px;color:#000;font-family:'Liberation Sans',sans-serif;transform:scaleX(1.0560)">25</div>
<div class="t" style="left:743.73px;top:351.00px;font-size:15.5px;color:#000;font-family:'Liberation Sans',sans-serif;transform:scaleX(1.0560)">7</div>
<div class="t" style="left:903.49px;top:351.00px;font-size:15.5px;color:#000;font-family:'Liberation Sans',sans-serif;transform:scaleX(1.0560)">0</div>
<div class="t" style="left:1038.49px;top:351.00px;font-size:15.5px;color:#000;font-family:'Liberation Sans',sans-serif;transform:scaleX(1.0560)">0</div>
<div class="t" style="left:132.77px;top:375.00px;font-size:15.5px;color:#000;font-family:'Liberation Sans',sans-serif;transform:scaleX(1.0560)">10-10-2024</div>
<div class="t" style="left:325.40px;top:375.00px;font-size:15.5px;color:#000;font-family:'Liberation Sans',sans-serif;transform:scaleX(1.0560)">30</div>
<div class="t" style="left:375.77px;top:375.00px;font-size:15.5px;color:#000;font-family:'Liberation Sans',sans-serif;transform:scaleX(1.0560)">07-10-2024</div>
<div class="t" style="left:581.49px;top:375.00px;font-size:15.5px;color:#000;font-family:'Liberation Sans',sans-serif;transform:scaleX(1.0560)">25</div>
<div class="t" style="left:743.73px;top:375.00px;font-size:15.5px;color:#000;font-family:'Liberation Sans',sans-serif;transform:scaleX(1.0560)">7</div>
<div class="t" style="left:903.49px;top:375.00px;font-size:15.5px;color:#000;font-family:'Liberation Sans',sans-serif;transform:scaleX(1.0560)">0</div>
<div class="t" style="left:1038.49px;top:375.00px;font-size:15.5px;color:#000;font-family:'Liberation Sans',sans-serif;transform:scaleX(1.0560)">0</div>
<div class="t" style="left:132.77px;top:399.00px;font-size:15.5px;color:#000;font-family:'Liberation Sans',sans-serif;transform:scaleX(1.0560)">10-10-2024</div>
<div class="t" style="left:325.40px;top:399.00px;font-size:15.5px;color:#000;font-family:'Liberation Sans',sans-serif;transform:scaleX(1.0560)">30</div>
<div class="t" style="left:375.77px;top:399.00px;font-size:15.5px;color:#000;font-family:'Liberation Sans',sans-serif;transform:scaleX(1.0560)">06-10-2024</div>
<div class="t" style="left:581.49px;top:399.00px;font-size:15.5px;color:#000;font-family:'Liberation Sans',sans-serif;transform:scaleX(1.0560)">25</div>
<div class="t" style="left:743.73px;top:399.00px;font-size:15.5px;color:#000;font-family:'Liberation Sans',sans-serif;transform:scaleX(1.0560)">7</div>
<div class="t" style="left:903.49px;top:399.00px;font-size:15.5px;color:#000;font-family:'Liberation Sans',sans-serif;transform:scaleX(1.0560)">0</div>
<div class="t" style="left:1038.49px;top:399.00px;font-size:15.5px;color:#000;font-family:'Liberation Sans',sans-serif;transform:scaleX(1.0560)">0</div>
<div class="t" style="left:132.77px;top:423.00px;font-size:15.5px;color:#000;font-family:'Liberation Sans',sans-serif;transform:scaleX(1.0560)">10-10-2024</div>
<div class="t" style="left:325.40px;top:423.00px;font-size:15.5px;color:#000;font-family:'Liberation Sans',sans-serif;transform:scaleX(1.0560)">30</div>
<div class="t" style="left:375.77px;top:423.00px;font-size:15.5px;color:#000;font-family:'Liberation Sans',sans-serif;transform:scaleX(1.0560)">05-10-2024</div>
<div class="t" style="left:581.49px;top:423.00px;font-size:15.5px;color:#000;font-family:'Liberation Sans',sans-serif;transform:scaleX(1.0560)">25</div>
<div class="t" style="left:743.73px;top:423.00px;font-size:15.5px;color:#000;font-family:'Liberation Sans',sans-serif;transform:scaleX(1.0560)">7</div>
<div class="t" style="left:903.49px;top:423.00px;font-size:15.5px;color:#000;font-family:'Liberation Sans',sans-serif;transform:scaleX(1.0560)">0</div>
<div class="t" style="left:1038.49px;top:423.00px;font-size:15.5px;color:#000;font-family:'Liberation Sans',sans-serif;transform:scaleX(1.0560)">0</div>
<div class="t" style="left:132.77px;top:447.00px;font-size:15.5px;color:#000;font-family:'Liberation Sans',sans-serif;transform:scaleX(1.0560)">10-10-2024</div>
<div class="t" style="left:325.40px;top:447.00px;font-size:15.5px;color:#000;font-family:'Liberation Sans',sans-serif;transform:scaleX(1.0560)">30</div>
<div class="t" style="left:375.77px;top:447.00px;font-size:15.5px;color:#000;font-family:'Liberation Sans',sans-serif;transform:scaleX(1.0560)">04-10-2024</div>
<div class="t" style="left:581.49px;top:447.00px;font-size:15.5px;color:#000;font-family:'Liberation Sans',sans-serif;transform:scaleX(1.0560)">25</div>
<div class="t" style="left:743.73px;top:447.00px;font-size:15.5px;color:#000;font-family:'Liberation Sans',sans-serif;transform:scaleX(1.0560)">7</div>
<div class="t" style="left:903.49px;top:447.00px;font-size:15.5px;color:#000;font-family:'Liberation Sans',sans-serif;transform:scaleX(1.0560)">0</div>
<div class="t" style="left:1038.49px;top:447.00px;font-size:15.5px;color:#000;font-family:'Liberation Sans',sans-serif;transform:scaleX(1.0560)">0</div>
<div class="t" style="left:132.77px;top:471.00px;font-size:15.5px;color:#000;font-family:'Liberation Sans',sans-serif;transform:scaleX(1.0560)">10-10-2024</div>
<div class="t" style="left:325.40px;top:471.00px;font-size:15.5px;color:#000;font-family:'Liberation Sans',sans-serif;transform:scaleX(1.0560)">30</div>
<div class="t" style="left:375.77px;top:471.00px;font-size:15.5px;color:#000;font-family:'Liberation Sans',sans-serif;transform:scaleX(1.0560)">03-10-2024</div>
<div class="t" style="left:581.49px;top:471.00px;font-size:15.5px;color:#000;font-family:'Liberation Sans',sans-serif;transform:scaleX(1.0560)">25</div>
<div class="t" style="left:743.73px;top:471.00px;font-size:15.5px;color:#000;font-family:'Liberation Sans',sans-serif;transform:scaleX(1.0560)">7</div>
<div class="t" style="left:903.49px;top:471.00px;font-size:15.5px;color:#000;font-family:'Liberation Sans',sans-serif;transform:scaleX(1.0560)">0</div>
<div class="t" style="left:1038.49px;top:471.00px;font-size:15.5px;color:#000;font-family:'Liberation Sans',sans-serif;transform:scaleX(1.0560)">0</div>
<div class="t" style="left:132.77px;top:495.00px;font-size:15.5px;color:#000;font-family:'Liberation Sans',sans-serif;transform:scaleX(1.0560)">10-10-2024</div>
<div class="t" style="left:325.40px;top:495.00px;font-size:15.5px;color:#000;font-family:'Liberation Sans',sans-serif;transform:scaleX(1.0560)">30</div>
<div class="t" style="left:375.77px;top:495.00px;font-size:15.5px;color:#000;font-family:'Liberation Sans',sans-serif;transform:scaleX(1.0560)">02-10-2024</div>
<div class="t" style="left:581.49px;top:495.00px;font-size:15.5px;color:#000;font-family:'Liberation Sans',sans-serif;transform:scaleX(1.0560)">25</div>
<div class="t" style="left:743.73px;top:495.00px;font-size:15.5px;color:#000;font-family:'Liberation Sans',sans-serif;transform:scaleX(1.0560)">7</div>
<div class="t" style="left:903.49px;top:495.00px;font-size:15.5px;color:#000;font-family:'Liberation Sans',sans-serif;transform:scaleX(1.0560)">0</div>
<div class="t" style="left:1038.49px;top:495.00px;font-size:15.5px;color:#000;font-family:'Liberation Sans',sans-serif;transform:scaleX(1.0560)">0</div>
<div class="t" style="left:132.77px;top:519.00px;font-size:15.5px;color:#000;font-family:'Liberation Sans',sans-serif;transform:scaleX(1.0560)">10-10-2024</div>
<div class="t" style="left:325.40px;top:519.00px;font-size:15.5px;color:#000;font-family:'Liberation Sans',sans-serif;transform:scaleX(1.0560)">30</div>
<div class="t" style="left:375.77px;top:519.00px;font-size:15.5px;color:#000;font-family:'Liberation Sans',sans-serif;transform:scaleX(1.0560)">01-10-2024</div>
<div class="t" style="left:581.49px;top:519.00px;font-size:15.5px;color:#000;font-family:'Liberation Sans',sans-serif;transform:scaleX(1.0560)">25</div>
<div class="t" style="left:743.73px;top:519.00px;font-size:15.5px;color:#000;font-family:'Liberation Sans',sans-serif;transform:scaleX(1.0560)">7</div>
<div class="t" style="left:903.49px;top:519.00px;font-size:15.5px;color:#000;font-family:'Liberation Sans',sans-serif;transform:scaleX(1.0560)">0</div>
<div class="t" style="left:1038.49px;top:519.00px;font-size:15.5px;color:#000;font-family:'Liberation Sans',sans-serif;transform:scaleX(1.0560)">0</div>
<div class="t" style="left:132.77px;top:543.00px;font-size:15.5px;color:#000;font-family:'Liberation Sans',sans-serif;transform:scaleX(1.0560)">10-10-2024</div>
<div class="t" style="left:325.40px;top:543.00px;font-size:15.5px;color:#000;font-family:'Liberation Sans',sans-serif;transform:scaleX(1.0560)">30</div>
<div class="t" style="left:375.77px;top:543.00px;font-size:15.5px;color:#000;font-family:'Liberation Sans',sans-serif;transform:scaleX(1.0560)">30-09-2024</div>
<div class="t" style="left:581.49px;top:543.00px;font-size:15.5px;color:#000;font-family:'Liberation Sans',sans-serif;transform:scaleX(1.0560)">25</div>
<div class="t" style="left:743.73px;top:543.00px;font-size:15.5px;color:#000;font-family:'Liberation Sans',sans-serif;transform:scaleX(1.0560)">7</div>
<div class="t" style="left:903.49px;top:543.00px;font-size:15.5px;color:#000;font-family:'Liberation Sans',sans-serif;transform:scaleX(1.0560)">0</div>
<div class="t" style="left:1038.49px;top:543.00px;font-size:15.5px;color:#000;font-family:'Liberation Sans',sans-serif;transform:scaleX(1.0560)">0</div>
<div class="t" style="left:132.77px;top:567.00px;font-size:15.5px;color:#000;font-family:'Liberation Sans',sans-serif;transform:scaleX(1.0560)">10-10-2024</div>
<div class="t" style="left:325.40px;top:567.00px;font-size:15.5px;color:#000;font-family:'Liberation Sans',sans-serif;transform:scaleX(1.0560)">30</div>
<div class="t" style="left:375.77px;top:567.00px;font-size:15.5px;color:#000;font-family:'Liberation Sans',sans-serif;transform:scaleX(1.0560)">29-09-2024</div>
<div class="t" style="left:581.49px;top:567.00px;font-size:15.5px;color:#000;font-family:'Liberation Sans',sans-serif;transform:scaleX(1.0560)">25</div>
<div class="t" style="left:743.73px;top:567.00px;font-size:15.5px;color:#000;font-family:'Liberation Sans',sans-serif;transform:scaleX(1.0560)">7</div>
<div class="t" style="left:903.49px;top:567.00px;font-size:15.5px;color:#000;font-family:'Liberation Sans',sans-serif;transform:scaleX(1.0560)">0</div>
<div class="t" style="left:1038.49px;top:567.00px;font-size:15.5px;color:#000;font-family:'Liberation Sans',sans-serif;transform:scaleX(1.0560)">0</div>
<div class="t" style="left:132.77px;top:591.00px;font-size:15.5px;color:#000;font-family:'Liberation Sans',sans-serif;transform:scaleX(1.0560)">10-10-2024</div>
<div class="t" style="left:325.40px;top:591.00px;font-size:15.5px;color:#000;font-family:'Liberation Sans',sans-serif;transform:scaleX(1.0560)">30</div>
<div class="t" style="left:375.77px;top:591.00px;font-size:15.5px;color:#000;font-family:'Liberation Sans',sans-serif;transform:scaleX(1.0560)">28-09-2024</div>
<div class="t" style="left:581.49px;top:591.00px;font-size:15.5px;color:#000;font-family:'Liberation Sans',sans-serif;transform:scaleX(1.0560)">25</div>
<div class="t" style="left:743.73px;top:591.00px;font-size:15.5px;color:#000;font-family:'Liberation Sans',sans-serif;transform:scaleX(1.0560)">7</div>
<div class="t" style="left:903.49px;top:591.00px;font-size:15.5px;color:#000;font-family:'Liberation Sans',sans-serif;transform:scaleX(1.0560)">0</div>
<div class="t" style="left:1038.49px;top:591.00px;font-size:15.5px;color:#000;font-family:'Liberation Sans',sans-serif;transform:scaleX(1.0560)">0</div>
<div class="t" style="left:132.77px;top:615.00px;font-size:15.5px;color:#000;font-family:'Liberation Sans',sans-serif;transform:scaleX(1.0560)">10-10-2024</div>
<div class="t" style="left:325.40px;top:615.00px;font-size:15.5px;color:#000;font-family:'Liberation Sans',sans-serif;transform:scaleX(1.0560)">30</div>
<div class="t" style="left:375.77px;top:615.00px;font-size:15.5px;color:#000;font-family:'Liberation Sans',sans-serif;transform:scaleX(1.0560)">27-09-2024</div>
<div class="t" style="left:581.49px;top:615.00px;font-size:15.5px;color:#000;font-family:'Liberation Sans',sans-serif;transform:scaleX(1.0560)">25</div>
<div class="t" style="left:743.73px;top:615.00px;font-size:15.5px;color:#000;font-family:'Liberation Sans',sans-serif;transform:scaleX(1.0560)">7</div>
<div class="t" style="left:903.49px;top:615.00px;font-size:15.5px;color:#000;font-family:'Liberation Sans',sans-serif;transform:scaleX(1.0560)">0</div>
<div class="t" style="left:1038.49px;top:615.00px;font-size:15.5px;color:#000;font-family:'Liberation Sans',sans-serif;transform:scaleX(1.0560)">0</div>
<div class="t" style="left:132.77px;top:639.00px;font-size:15.5px;color:#000;font-family:'Liberation Sans',sans-serif;transform:scaleX(1.0560)">10-10-2024</div>
<div class="t" style="left:325.40px;top:639.00px;font-size:15.5px;color:#000;font-family:'Liberation Sans',sans-serif;transform:scaleX(1.0560)">30</div>
<div class="t" style="left:375.77px;top:639.00px;font-size:15.5px;color:#000;font-family:'Liberation Sans',sans-serif;transform:scaleX(1.0560)">26-09-2024</div>
<div class="t" style="left:581.49px;top:639.00px;font-size:15.5px;color:#000;font-family:'Liberation Sans',sans-serif;transform:scaleX(1.0560)">25</div>
<div class="t" style="left:743.73px;top:639.00px;font-size:15.5px;color:#000;font-family:'Liberation Sans',sans-serif;transform:scaleX(1.0560)">7</div>
<div class="t" style="left:903.49px;top:639.00px;font-size:15.5px;color:#000;font-family:'Liberation Sans',sans-serif;transform:scaleX(1.0560)">0</div>
<div class="t" style="left:1038.49px;top:639.00px;font-size:15.5px;color:#000;font-family:'Liberation Sans',sans-serif;transform:scaleX(1.0560)">0</div>
<div class="t" style="left:132.77px;top:663.00px;font-size:15.5px;color:#000;font-family:'Liberation Sans',sans-serif;transform:scaleX(1.0560)">10-10-2024</div>
<div class="t" style="left:325.40px;top:663.00px;font-size:15.5px;color:#000;font-family:'Liberation Sans',sans-serif;transform:scaleX(1.0560)">30</div>
<div class="t" style="left:375.77px;top:663.00px;font-size:15.5px;color:#000;font-family:'Liberation Sans',sans-serif;transform:scaleX(1.0560)">25-09-2024</div>
<div class="t" style="left:581.49px;top:663.00px;font-size:15.5px;color:#000;font-family:'Liberation Sans',sans-serif;transform:scaleX(1.0560)">25</div>
<div class="t" style="left:743.73px;top:663.00px;font-size:15.5px;color:#000;font-family:'Liberation Sans',sans-serif;transform:scaleX(1.0560)">7</div>
<div class="t" style="left:903.49px;top:663.00px;font-size:15.5px;color:#000;font-family:'Liberation Sans',sans-serif;transform:scaleX(1.0560)">0</div>
<div class="t" style="left:1038.49px;top:663.00px;font-size:15.5px;color:#000;font-family:'Liberation Sans',sans-serif;transform:scaleX(1.0560)">0</div>
<div class="t" style="left:132.77px;top:687.00px;font-size:15.5px;color:#000;font-family:'Liberation Sans',sans-serif;transform:scaleX(1.0560)">10-10-2024</div>
<div class="t" style="left:325.40px;top:687.00px;font-size:15.5px;color:#000;font-family:'Liberation Sans',sans-serif;transform:scaleX(1.0560)">30</div>
<div class="t" style="left:375.77px;top:687.00px;font-size:15.5px;color:#000;font-family:'Liberation Sans',sans-serif;transform:scaleX(1.0560)">24-09-2024</div>
<div class="t" style="left:581.49px;top:687.00px;font-size:15.5px;color:#000;font-family:'Liberation Sans',sans-serif;transform:scaleX(1.0560)">25</div>
<div class="t" style="left:743.73px;top:687.00px;font-size:15.5px;color:#000;font-family:'Liberation Sans',sans-serif;transform:scaleX(1.0560)">7</div>
<div class="t" style="left:903.49px;top:687.00px;font-size:15.5px;color:#000;font-family:'Liberation Sans',sans-serif;transform:scaleX(1.0560)">0</div>
<div class="t" style="left:1038.49px;top:687.00px;font-size:15.5px;color:#000;font-family:'Liberation Sans',sans-serif;transform:scaleX(1.0560)">0</div>
<div class="t" style="left:132.77px;top:711.00px;font-size:15.5px;color:#000;font-family:'Liberation Sans',sans-serif;transform:scaleX(1.0560)">10-10-2024</div>
<div class="t" style="left:325.40px;top:711.00px;font-size:15.5px;color:#000;font-family:'Liberation Sans',sans-serif;transform:scaleX(1.0560)">30</div>
<div class="t" style="left:375.77px;top:711.00px;font-size:15.5px;color:#000;font-family:'Liberation Sans',sans-serif;transform:scaleX(1.0560)">23-09-2024</div>
<div class="t" style="left:581.49px;top:711.00px;font-size:15.5px;color:#000;font-family:'Liberation Sans',sans-serif;transform:scaleX(1.0560)">25</div>
<div class="t" style="left:743.73px;top:711.00px;font-size:15.5px;color:#000;font-family:'Liberation Sans',sans-serif;transform:scaleX(1.0560)">7</div>
<div class="t" style="left:903.49px;top:711.00px;font-size:15.5px;color:#000;font-family:'Liberation Sans',sans-serif;transform:scaleX(1.0560)">0</div>
<div class="t" style="left:1038.49px;top:711.00px;font-size:15.5px;color:#000;font-family:'Liberation Sans',sans-serif;transform:scaleX(1.0560)">0</div>
<div class="t" style="left:132.77px;top:735.00px;font-size:15.5px;color:#000;font-family:'Liberation Sans',sans-serif;transform:scaleX(1.0560)">10-10-2024</div>
<div class="t" style="left:325.40px;top:735.00px;font-size:15.5px;color:#000;font-family:'Liberation Sans',sans-serif;transform:scaleX(1.0560)">30</div>
<div class="t" style="left:375.77px;top:735.00px;font-size:15.5px;color:#000;font-family:'Liberation Sans',sans-serif;transform:scaleX(1.0560)">22-09-2024</div>
<div class="t" style="left:581.49px;top:735.00px;font-size:15.5px;color:#000;font-family:'Liberation Sans',sans-serif;transform:scaleX(1.0560)">25</div>
<div class="t" style="left:743.73px;top:735.00px;font-size:15.5px;color:#000;font-family:'Liberation Sans',sans-serif;transform:scaleX(1.0560)">7</div>
<div class="t" style="left:903.49px;top:735.00px;font-size:15.5px;color:#000;font-family:'Liberation Sans',sans-serif;transform:scaleX(1.0560)">0</div>
<div class="t" style="left:1038.49px;top:735.00px;font-size:15.5px;color:#000;font-family:'Liberation Sans',sans-serif;transform:scaleX(1.0560)">0</div>
<div class="t" style="left:132.77px;top:759.00px;font-size:15.5px;color:#000;font-family:'Liberation Sans',sans-serif;transform:scaleX(1.0560)">10-10-2024</div>
<div class="t" style="left:325.40px;top:759.00px;font-size:15.5px;color:#000;font-family:'Liberation Sans',sans-serif;transform:scaleX(1.0560)">30</div>
<div class="t" style="left:375.77px;top:759.00px;font-size:15.5px;color:#000;font-family:'Liberation Sans',sans-serif;transform:scaleX(1.0560)">21-09-2024</div>
<div class="t" style="left:581.49px;top:759.00px;font-size:15.5px;color:#000;font-family:'Liberation Sans',sans-serif;transform:scaleX(1.0560)">25</div>
<div class="t" style="left:743.73px;top:759.00px;font-size:15.5px;color:#000;font-family:'Liberation Sans',sans-serif;transform:scaleX(1.0560)">7</div>
<div class="t" style="left:903.49px;top:759.00px;font-size:15.5px;color:#000;font-family:'Liberation Sans',sans-serif;transform:scaleX(1.0560)">0</div>
<div class="t" style="left:1038.49px;top:759.00px;font-size:15.5px;color:#000;font-family:'Liberation Sans',sans-serif;transform:scaleX(1.0560)">0</div>
<div class="t" style="left:132.77px;top:783.00px;font-size:15.5px;color:#000;font-family:'Liberation Sans',sans-serif;transform:scaleX(1.0560)">10-10-2024</div>
<div class="t" style="left:325.40px;top:783.00px;font-size:15.5px;color:#000;font-family:'Liberation Sans',sans-serif;transform:scaleX(1.0560)">30</div>
<div class="t" style="left:375.77px;top:783.00px;font-size:15.5px;color:#000;font-family:'Liberation Sans',sans-serif;transform:scaleX(1.0560)">20-09-2024</div>
<div class="t" style="left:581.49px;top:783.00px;font-size:15.5px;color:#000;font-family:'Liberation Sans',sans-serif;transform:scaleX(1.0560)">25</div>
<div class="t" style="left:743.73px;top:783.00px;font-size:15.5px;color:#000;font-family:'Liberation Sans',sans-serif;transform:scaleX(1.0560)">7</div>
<div class="t" style="left:903.49px;top:783.00px;font-size:15.5px;color:#000;font-family:'Liberation Sans',sans-serif;transform:scaleX(1.0560)">0</div>
<div class="t" style="left:1038.49px;top:783.00px;font-size:15.5px;color:#000;font-family:'Liberation Sans',sans-serif;transform:scaleX(1.0560)">0</div>
<div class="t" style="left:132.77px;top:807.00px;font-size:15.5px;color:#000;font-family:'Liberation Sans',sans-serif;transform:scaleX(1.0560)">10-10-2024</div>
<div class="t" style="left:325.40px;top:807.00px;font-size:15.5px;color:#000;font-family:'Liberation Sans',sans-serif;transform:scaleX(1.0560)">30</div>
<div class="t" style="left:375.77px;top:807.00px;font-size:15.5px;color:#000;font-family:'Liberation Sans',sans-serif;transform:scaleX(1.0560)">19-09-2024</div>
<div class="t" style="left:581.49px;top:807.00px;font-size:15.5px;color:#000;font-family:'Liberation Sans',sans-serif;transform:scaleX(1.0560)">25</div>
<div class="t" style="left:743.73px;top:807.00px;font-size:15.5px;color:#000;font-family:'Liberation Sans',sans-serif;transform:scaleX(1.0560)">7</div>
<div class="t" style="left:903.49px;top:807.00px;font-size:15.5px;color:#000;font-family:'Liberation Sans',sans-serif;transform:scaleX(1.0560)">0</div>
<div class="t" style="left:1038.49px;top:807.00px;font-size:15.5px;color:#000;font-family:'Liberation Sans',sans-serif;transform:scaleX(1.0560)">0</div>
<div class="t" style="left:132.77px;top:831.00px;font-size:15.5px;color:#000;font-family:'Liberation Sans',sans-serif;transform:scaleX(1.0560)">10-10-2024</div>
<div class="t" style="left:325.40px;top:831.00px;font-size:15.5px;color:#000;font-family:'Liberation Sans',sans-serif;transform:scaleX(1.0560)">30</div>
<div class="t" style="left:375.77px;top:831.00px;font-size:15.5px;color:#000;font-family:'Liberation Sans',sans-serif;transform:scaleX(1.0560)">18-09-2024</div>
<div class="t" style="left:581.49px;top:831.00px;font-size:15.5px;color:#000;font-family:'Liberation Sans',sans-serif;transform:scaleX(1.0560)">25</div>
<div class="t" style="left:743.73px;top:831.00px;font-size:15.5px;color:#000;font-family:'Liberation Sans',sans-serif;transform:scaleX(1.0560)">7</div>
<div class="t" style="left:903.49px;top:831.00px;font-size:15.5px;color:#000;font-family:'Liberation Sans',sans-serif;transform:scaleX(1.0560)">0</div>
<div class="t" style="left:1038.49px;top:831.00px;font-size:15.5px;color:#000;font-family:'Liberation Sans',sans-serif;transform:scaleX(1.0560)">0</div>
<div class="t" style="left:132.77px;top:855.00px;font-size:15.5px;color:#000;font-family:'Liberation Sans',sans-serif;transform:scaleX(1.0560)">10-10-2024</div>
<div class="t" style="left:325.40px;top:855.00px;font-size:15.5px;color:#000;font-family:'Liberation Sans',sans-serif;transform:scaleX(1.0560)">30</div>
<div class="t" style="left:375.77px;top:855.00px;font-size:15.5px;color:#000;font-family:'Liberation Sans',sans-serif;transform:scaleX(1.0560)">17-09-2024</div>
<div class="t" style="left:581.49px;top:855.00px;font-size:15.5px;color:#000;font-family:'Liberation Sans',sans-serif;transform:scaleX(1.0560)">25</div>
<div class="t" style="left:743.73px;top:855.00px;font-size:15.5px;color:#000;font-family:'Liberation Sans',sans-serif;transform:scaleX(1.0560)">7</div>
<div class="t" style="left:903.49px;top:855.00px;font-size:15.5px;color:#000;font-family:'Liberation Sans',sans-serif;transform:scaleX(1.0560)">0</div>
<div class="t" style="left:1038.49px;top:855.00px;font-size:15.5px;color:#000;font-family:'Liberation Sans',sans-serif;transform:scaleX(1.0560)">0</div>
<div class="t" style="left:132.77px;top:879.00px;font-size:15.5px;color:#000;font-family:'Liberation Sans',sans-serif;transform:scaleX(1.0560)">10-10-2024</div>
<div class="t" style="left:325.40px;top:879.00px;font-size:15.5px;color:#000;font-family:'Liberation Sans',sans-serif;transform:scaleX(1.0560)">30</div>
<div class="t" style="left:375.77px;top:879.00px;font-size:15.5px;color:#000;font-family:'Liberation Sans',sans-serif;transform:scaleX(1.0560)">16-09-2024</div>
<div class="t" style="left:581.49px;top:879.00px;font-size:15.5px;color:#000;font-family:'Liberation Sans',sans-serif;transform:scaleX(1.0560)">25</div>
<div class="t" style="left:743.73px;top:879.00px;font-size:15.5px;color:#000;font-family:'Liberation Sans',sans-serif;transform:scaleX(1.0560)">7</div>
<div class="t" style="left:903.49px;top:879.00px;font-size:15.5px;color:#000;font-family:'Liberation Sans',sans-serif;transform:scaleX(1.0560)">0</div>
<div class="t" style="left:1038.49px;top:879.00px;font-size:15.5px;color:#000;font-family:'Liberation Sans',sans-serif;transform:scaleX(1.0560)">0</div>
<div class="t" style="left:132.77px;top:903.00px;font-size:15.5px;color:#000;font-family:'Liberation Sans',sans-serif;transform:scaleX(1.0560)">10-10-2024</div>
<div class="t" style="left:325.40px;top:903.00px;font-size:15.5px;color:#000;font-family:'Liberation Sans',sans-serif;transform:scaleX(1.0560)">30</div>
<div class="t" style="left:375.77px;top:903.00px;font-size:15.5px;color:#000;font-family:'Liberation Sans',sans-serif;transform:scaleX(1.0560)">15-09-2024</div>
<div class="t" style="left:581.40px;top:903.00px;font-size:15.5px;color:#000;font-family:'Liberation Sans',sans-serif;transform:scaleX(1.0560)">20</div>
<div class="t" style="left:743.57px;top:903.00px;font-size:15.5px;color:#000;font-family:'Liberation Sans',sans-serif;transform:scaleX(1.0560)">6</div>
<div class="t" style="left:903.49px;top:903.00px;font-size:15.5px;color:#000;font-family:'Liberation Sans',sans-serif;transform:scaleX(1.0560)">0</div>
<div class="t" style="left:1038.49px;top:903.00px;font-size:15.5px;color:#000;font-family:'Liberation Sans',sans-serif;transform:scaleX(1.0560)">0</div>
<div class="t" style="left:132.77px;top:927.00px;font-size:15.5px;color:#000;font-family:'Liberation Sans',sans-serif;transform:scaleX(1.0560)">10-10-2024</div>
<div class="t" style="left:325.40px;top:927.00px;font-size:15.5px;color:#000;font-family:'Liberation Sans',sans-serif;transform:scaleX(1.0560)">30</div>
<div class="t" style="left:375.77px;top:927.00px;font-size:15.5px;color:#000;font-family:'Liberation Sans',sans-serif;transform:scaleX(1.0560)">14-09-2024</div>
<div class="t" style="left:581.40px;top:927.00px;font-size:15.5px;color:#000;font-family:'Liberation Sans',sans-serif;transform:scaleX(1.0560)">20</div>
<div class="t" style="left:743.57px;top:927.00px;font-size:15.5px;color:#000;font-family:'Liberation Sans',sans-serif;transform:scaleX(1.0560)">6</div>
<div class="t" style="left:903.49px;top:927.00px;font-size:15.5px;color:#000;font-family:'Liberation Sans',sans-serif;transform:scaleX(1.0560)">0</div>
<div class="t" style="left:1038.49px;top:927.00px;font-size:15.5px;color:#000;font-family:'Liberation Sans',sans-serif;transform:scaleX(1.0560)">0</div>
<div class="t" style="left:132.77px;top:951.00px;font-size:15.5px;color:#000;font-family:'Liberation Sans',sans-serif;transform:scaleX(1.0560)">10-10-2024</div>
<div class="t" style="left:325.40px;top:951.00px;font-size:15.5px;color:#000;font-family:'Liberation Sans',sans-serif;transform:scaleX(1.0560)">30</div>
<div class="t" style="left:375.77px;top:951.00px;font-size:15.5px;color:#000;font-family:'Liberation Sans',sans-serif;transform:scaleX(1.0560)">13-09-2024</div>
<div class="t" style="left:581.40px;top:951.00px;font-size:15.5px;color:#000;font-family:'Liberation Sans',sans-serif;transform:scaleX(1.0560)">20</div>
<div class="t" style="left:743.57px;top:951.00px;font-size:15.5px;color:#000;font-family:'Liberation Sans',sans-serif;transform:scaleX(1.0560)">6</div>
<div class="t" style="left:903.49px;top:951.00px;font-size:15.5px;color:#000;font-family:'Liberation Sans',sans-serif;transform:scaleX(1.0560)">0</div>
<div class="t" style="left:1038.49px;top:951.00px;font-size:15.5px;color:#000;font-family:'Liberation Sans',sans-serif;transform:scaleX(1.0560)">0</div>
<div class="a" style="left:1051px;top:274px;width:1px;height:23px;background:#fff;"></div>
<div class="a" style="left:23px;top:272px;width:199px;height:27px;background:transparent;border:2px solid #217346"></div>
<div class="a" style="left:217px;top:294px;width:7px;height:7px;background:#217346;border:1px solid #fff"></div>
</body></html>
